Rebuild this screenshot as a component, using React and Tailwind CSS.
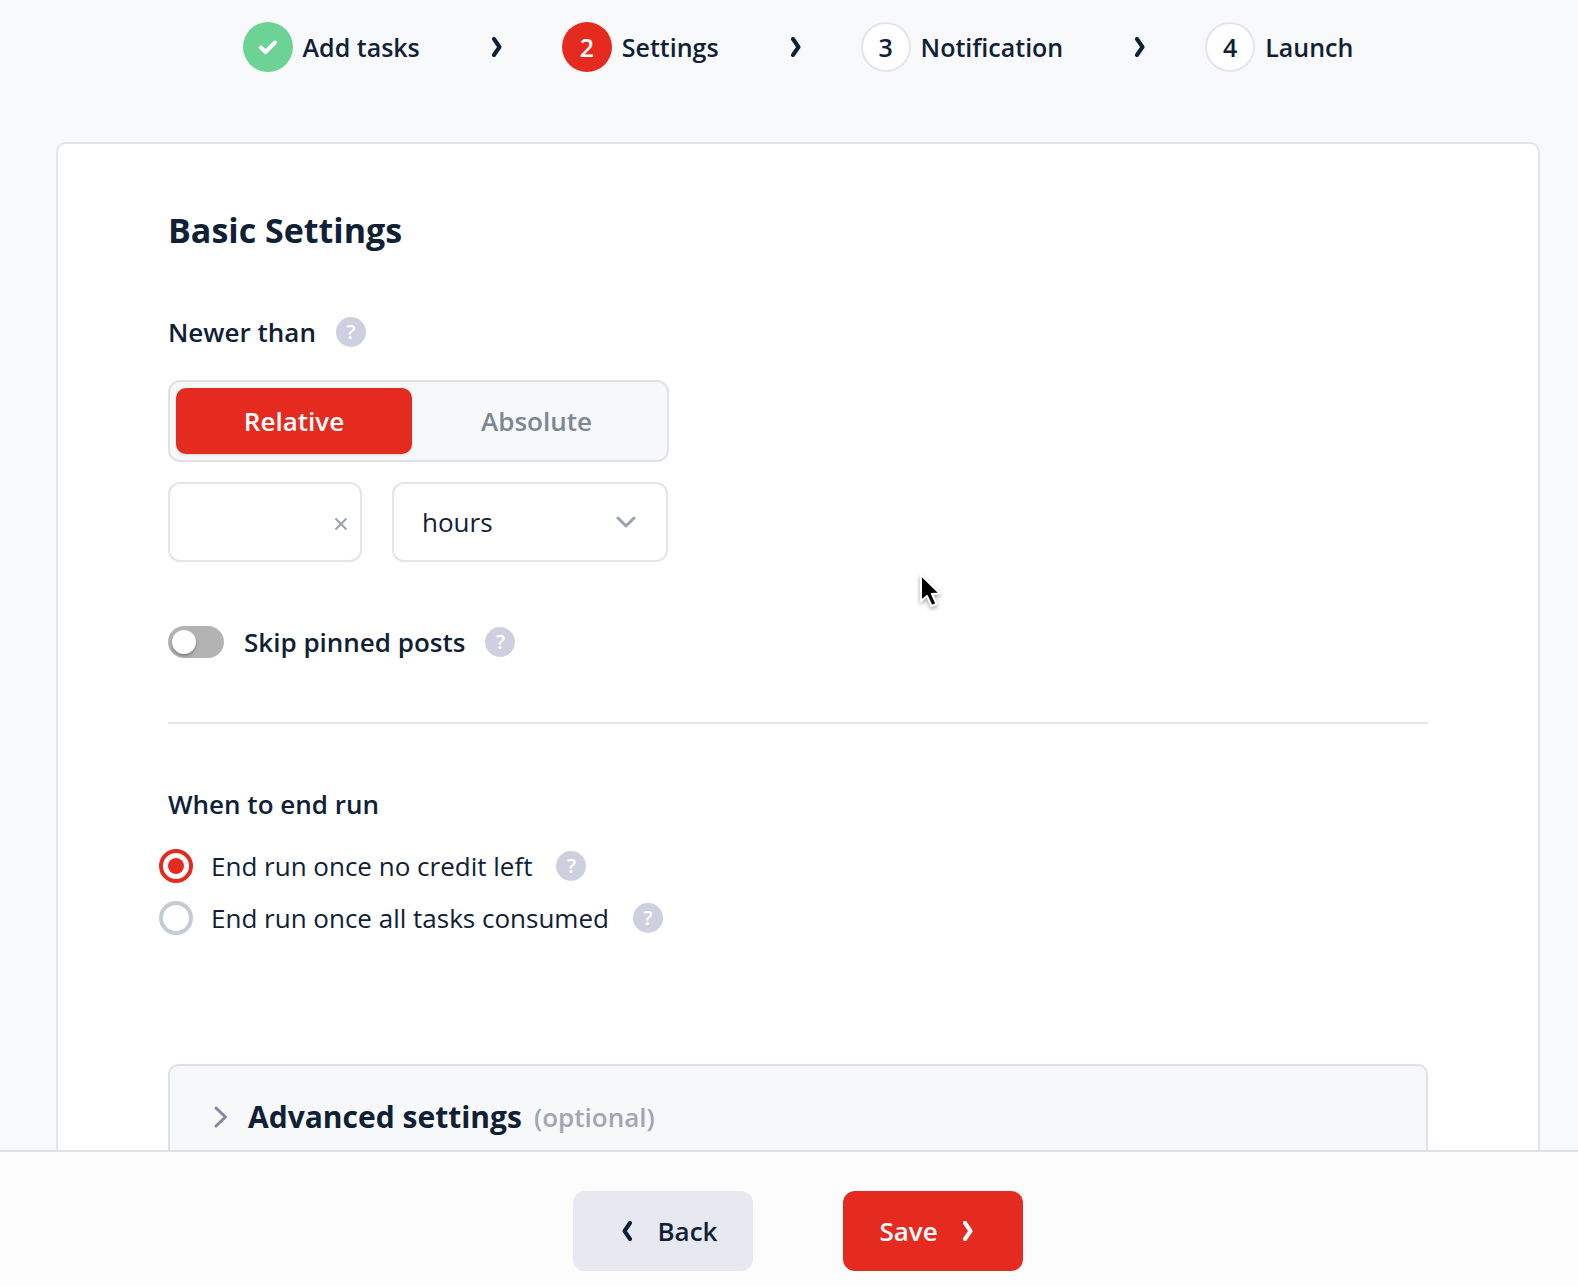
import React, { useState } from "react";

const steps = [
  { id: 1, label: "Add tasks", status: "done" },
  { id: 2, label: "Settings", status: "active" },
  { id: 3, label: "Notification", status: "pending" },
  { id: 4, label: "Launch", status: "pending" },
];

const circleStyles = {
  done: "bg-[#6dd394] text-white",
  active: "bg-[#e52b20] text-white",
  pending: "bg-white border-2 border-[#e4e4eb]",
};

const endOptions = [
  { value: "credit", label: "End run once no credit left" },
  { value: "tasks", label: "End run once all tasks consumed" },
];

function BoldChevron({ className }) {
  return (
    <svg viewBox="0 0 10 20" className={className} fill="none" aria-hidden="true">
      <path d="M2 2 L7.5 10 L2 18" stroke="currentColor" strokeWidth="4" strokeLinecap="round" strokeLinejoin="round" />
    </svg>
  );
}

function Help() {
  return (
    <button
      type="button"
      aria-label="Help"
      className="flex h-[30px] w-[30px] shrink-0 items-center justify-center rounded-full bg-[#cfd0df] text-xl font-semibold leading-none text-white"
    >
      ?
    </button>
  );
}

function Stepper() {
  return (
    <ol className="flex items-center justify-center pt-[22px] text-[25px]">
      {steps.map((step, index) => (
        <li key={step.id} className="flex items-center">
          {index > 0 && <BoldChevron className="mr-[60px] ml-[72px] h-5 w-[10px]" />}
          <span
            className={`flex h-[50px] w-[50px] items-center justify-center rounded-full ${circleStyles[step.status]}`}
          >
            {step.status === "done" ? (
              <svg viewBox="0 0 20 16" className="h-4 w-5" fill="none" aria-hidden="true">
                <path d="M3 8.5 L7.5 13 L17 3.5" stroke="currentColor" strokeWidth="4" strokeLinecap="round" strokeLinejoin="round" />
              </svg>
            ) : (
              step.id
            )}
          </span>
          <span className="ml-[10px]">{step.label}</span>
        </li>
      ))}
    </ol>
  );
}

export default function App() {
  const [mode, setMode] = useState("relative");
  const [amount, setAmount] = useState("");
  const [unit, setUnit] = useState("hours");
  const [skipPinned, setSkipPinned] = useState(false);
  const [endRun, setEndRun] = useState("credit");

  const tabClass = (name) =>
    `rounded-[10px] ${
      mode === name ? "bg-[#e52b20] text-white shadow-sm" : "text-[#7b8794]"
    }`;

  return (
    <div className="relative flex h-screen flex-col overflow-hidden bg-[#f8f9fb] font-['Open_Sans','Noto_Sans',sans-serif] text-[26px] leading-9 font-semibold text-[#102136]">
      <main className="min-h-0 flex-1 overflow-hidden pr-[38px] pl-14">
        <Stepper />

        {/* Settings card */}
        <section className="mt-[70px] rounded-[10px] border-2 border-[#e4e4eb] bg-white px-[110px] pt-16 pb-16">
          <h1 className="text-[34px] leading-11 font-bold">Basic Settings</h1>

          <div className="mt-[62px] flex items-center gap-5">
            <h2>Newer than</h2>
            <Help />
          </div>

          <div className="mt-[30px] grid h-[82px] w-[501px] grid-cols-[236px_1fr] rounded-xl border-2 border-[#dfe0e8] bg-[#f7f8fa] p-[6px]">
            <button type="button" className={tabClass("relative")} onClick={() => setMode("relative")}>
              Relative
            </button>
            <button type="button" className={tabClass("absolute")} onClick={() => setMode("absolute")}>
              Absolute
            </button>
          </div>

          <div className="mt-5 flex w-[500px] gap-[30px] font-normal">
            <div className="flex h-20 w-[194px] items-center rounded-xl border-2 border-[#e4e4eb] pr-3 pl-7">
              <input
                type="text"
                aria-label="Amount"
                value={amount}
                onChange={(e) => setAmount(e.target.value)}
                className="w-full min-w-0 outline-none"
              />
              <button type="button" aria-label="Clear" className="text-[#9aa3af]" onClick={() => setAmount("")}>
                <svg viewBox="0 0 14 14" className="mt-1 h-[14px] w-[14px]" fill="none">
                  <path d="M1.5 1.5 L12.5 12.5 M12.5 1.5 L1.5 12.5" stroke="currentColor" strokeWidth="2" />
                </svg>
              </button>
            </div>
            <div className="flex h-20 flex-1 items-center rounded-xl border-2 border-[#e4e4eb] pr-[30px] pl-7">
              <select
                aria-label="Unit"
                value={unit}
                onChange={(e) => setUnit(e.target.value)}
                className="h-full flex-1 appearance-none outline-none"
              >
                <option value="hours">hours</option>
                <option value="days">days</option>
                <option value="weeks">weeks</option>
              </select>
              <svg viewBox="0 0 20 12" className="h-3 w-5 text-[#98a1b0]" fill="none" aria-hidden="true">
                <path d="M2 2 L10 10 L18 2" stroke="currentColor" strokeWidth="3" strokeLinecap="round" strokeLinejoin="round" />
              </svg>
            </div>
          </div>

          <div className="mt-[62px] flex items-center">
            <input
              id="skip-pinned"
              type="checkbox"
              role="switch"
              checked={skipPinned}
              onChange={(e) => setSkipPinned(e.target.checked)}
              className="h-8 w-14 appearance-none rounded-full bg-[#b3b3b3] p-1 before:block before:h-6 before:w-6 before:rounded-full before:bg-white before:shadow-[0_2px_3px_rgba(16,33,54,0.35)] before:content-[''] checked:bg-[#e52b20] checked:before:ml-6"
            />
            <label htmlFor="skip-pinned" className="mr-5 ml-5">
              Skip pinned posts
            </label>
            <Help />
          </div>

          <hr className="mt-[62px] border-t-2 border-[#e4e4eb]" />

          <fieldset className="mt-[62px]">
            <legend>When to end run</legend>
            <div className="-ml-[9px] mt-[26px] flex flex-col gap-4 font-normal">
              {endOptions.map((option) => (
                <div key={option.value} className="flex items-center">
                  <input
                    id={option.value}
                    type="radio"
                    name="end-run"
                    checked={endRun === option.value}
                    onChange={() => setEndRun(option.value)}
                    className="flex h-[34px] w-[34px] appearance-none items-center justify-center rounded-full border-4 border-[#c5cbd3] checked:border-[#e52b20] checked:before:h-4 checked:before:w-4 checked:before:rounded-full checked:before:bg-[#e52b20] checked:before:content-['']"
                  />
                  <label htmlFor={option.value} className="mr-6 ml-[18px]">
                    {option.label}
                  </label>
                  <Help />
                </div>
              ))}
            </div>
          </fieldset>

          {/* Advanced settings */}
          <button
            type="button"
            className="mt-32 flex h-[106px] w-full items-center rounded-[10px] border-2 border-[#dfe0e8] bg-[#f7f8fa] pl-11"
          >
            <svg viewBox="0 0 14 22" className="mr-5 h-[22px] w-[14px] text-[#7f88a0]" fill="none" aria-hidden="true">
              <path d="M2 2 L11.5 11 L2 20" stroke="currentColor" strokeWidth="3" strokeLinecap="round" strokeLinejoin="round" />
            </svg>
            <span className="text-[30px] font-bold">Advanced settings</span>
            <span className="ml-3 text-[#9fa7b4]">(optional)</span>
          </button>
        </section>
      </main>

      {/* Bottom bar */}
      <footer className="flex shrink-0 justify-center gap-[90px] border-t-2 border-[#dfe0e8] bg-[#fcfcfd] pt-[39px] pr-[38px] pb-[15px] pl-14">
        <button type="button" className="flex h-20 w-[180px] items-center justify-center gap-[25px] rounded-xl bg-[#e8e9f0] pl-[14px]">
          <BoldChevron className="h-5 w-[10px] rotate-180" />
          Back
        </button>
        <button type="button" className="flex h-20 w-[180px] items-center justify-center gap-[25px] rounded-xl bg-[#e52b20] pr-[14px] text-white">
          Save
          <BoldChevron className="h-5 w-[10px]" />
        </button>
      </footer>

      {/* Pointer */}
      <svg viewBox="0 0 24 36" className="pointer-events-none absolute top-[573px] left-[919px] h-9 w-6 drop-shadow-[0_2px_2px_rgba(0,0,0,0.35)]" aria-hidden="true">
        <path d="M2 2 L2 28 L8 23 L12.5 33 L17.5 31 L13 21 L21 20.5 Z" fill="#000" stroke="#fff" strokeWidth="2" strokeLinejoin="round" />
      </svg>
    </div>
  );
}
